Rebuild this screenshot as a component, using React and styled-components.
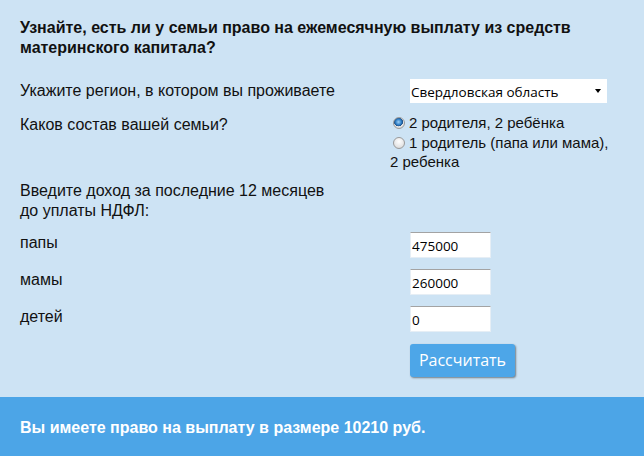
import React, { useState } from 'react';
import styled, { createGlobalStyle } from 'styled-components';

const GlobalStyle = createGlobalStyle`
    html, body {
        margin: 0;
        padding: 0;
        background: #cde3f4;
    }
    body {
        font-family: "Liberation Sans", Arial, sans-serif;
        color: #111;
    }
`;

const Page = styled.div`
    width: 644px;
    height: 456px;
    display: flex;
    flex-direction: column;
    background: #cde3f4;
    overflow: hidden;
`;

const Form = styled.div`
    flex: 1;
    padding: 18px 0 0 20px;
`;

const Title = styled.h1`
    margin: 0 0 21px;
    font-size: 16px;
    line-height: 20px;
    font-weight: bold;
    width: 580px;
`;

const Row = styled.div`
    display: grid;
    grid-template-columns: 370px 1fr;
    align-items: ${props => props.$align || 'start'};
    margin-bottom: ${props => props.$gap || 0}px;
`;

const Label = styled.div`
    font-size: 16px;
    line-height: 20px;
    padding-top: ${props => props.$top || 0}px;
`;

const Control = styled.div`
    padding-left: ${props => props.$indent ?? 20}px;
`;

const SelectWrap = styled.div`
    position: relative;
    width: 197px;
    height: 24px;
    background: #fff;
    &::after {
        content: '';
        position: absolute;
        right: 6px;
        top: 10px;
        border-left: 3.5px solid transparent;
        border-right: 3.5px solid transparent;
        border-top: 4px solid #000;
        pointer-events: none;
    }
`;

const Select = styled.select`
    appearance: none;
    width: 100%;
    height: 100%;
    border: 0;
    background: transparent;
    font-family: "Open Sans", "Noto Sans", sans-serif;
    font-size: 13.5px;
    color: #000;
    padding: 2px 0 0 1px;
    outline: none;
`;

const RadioList = styled.div`
    width: 220px;
    font-size: 15px;
    line-height: 19.5px;
`;

const RadioLabel = styled.label`
    display: block;
    cursor: pointer;
`;

const Radio = styled.input.attrs({ type: 'radio' })`
    appearance: none;
    box-sizing: border-box;
    margin: 0 4px 0 3px;
    width: 12px;
    height: 12px;
    vertical-align: -1px;
    border-radius: 50%;
    border: 1px solid #9a9a9a;
    background: radial-gradient(circle at 50% 35%, #ffffff 0%, #e6e6e6 60%, #d2d2d2 100%);
    cursor: pointer;
    &:checked {
        background:
            radial-gradient(circle at 45% 40%, #9fd0f5 0%, #2f7fc7 35%, #1d4f86 52%, transparent 56%),
            radial-gradient(circle at 50% 35%, #ffffff 0%, #e6e6e6 60%, #d2d2d2 100%);
    }
`;

const Field = styled.input`
    box-sizing: border-box;
    width: 81px;
    height: 26px;
    padding: 3px 1px 0;
    border: 1px solid #e6eef5;
    border-top-color: #a3a3a3;
    background: #fff;
    font-family: "Open Sans", "Noto Sans", sans-serif;
    font-size: 13.5px;
    color: #000;
    outline: none;
`;

const Button = styled.button`
    width: 105px;
    height: 33px;
    background: #4da6e8;
    color: #fff;
    border: 0;
    border-radius: 3px;
    box-shadow: 1px 1px 2px rgba(0, 0, 0, 0.45);
    font-family: "Open Sans", "Noto Sans", sans-serif;
    font-size: 16px;
    cursor: pointer;
`;

const Result = styled.div`
    height: 59px;
    background: #4ca5e7;
    color: #fff;
    font-size: 16px;
    font-weight: bold;
    display: flex;
    align-items: center;
    padding: 3px 0 0 20px;
    box-sizing: border-box;
`;

export default function App() {
    const [family, setFamily] = useState('two');
    const [income, setIncome] = useState({ dad: '475000', mom: '260000', kids: '0' });

    const setField = key => e => setIncome({ ...income, [key]: e.target.value });

    return (
        <Page>
            <GlobalStyle />
            <Form>
                <Title>Узнайте, есть ли у семьи право на ежемесячную выплату из средств материнского капитала?</Title>

                <Row $align="center" $gap={10}>
                    <Label>Укажите регион, в котором вы проживаете</Label>
                    <Control>
                        <SelectWrap>
                            <Select defaultValue="sverdl">
                                <option value="sverdl">Свердловская область</option>
                            </Select>
                        </SelectWrap>
                    </Control>
                </Row>

                <Row $gap={9}>
                    <Label $top={2}>Каков состав вашей семьи?</Label>
                    <Control $indent={0}>
                        <RadioList>
                            <RadioLabel>
                                <Radio name="family" checked={family === 'two'} onChange={() => setFamily('two')} />
                                2 родителя, 2 ребёнка
                            </RadioLabel>
                            <RadioLabel>
                                <Radio name="family" checked={family === 'one'} onChange={() => setFamily('one')} />
                                1 родитель (папа или мама), 2 ребенка
                            </RadioLabel>
                        </RadioList>
                    </Control>
                </Row>

                <Row $gap={11}>
                    <Label>Введите доход за последние 12 месяцев<br />до уплаты НДФЛ:</Label>
                </Row>

                <Row $gap={11}>
                    <Label $top={1}>папы</Label>
                    <Control><Field value={income.dad} onChange={setField('dad')} /></Control>
                </Row>
                <Row $gap={11}>
                    <Label $top={1}>мамы</Label>
                    <Control><Field value={income.mom} onChange={setField('mom')} /></Control>
                </Row>
                <Row $gap={12}>
                    <Label $top={1}>детей</Label>
                    <Control><Field value={income.kids} onChange={setField('kids')} /></Control>
                </Row>
                <Row>
                    <div />
                    <Control><Button>Рассчитать</Button></Control>
                </Row>
            </Form>
            <Result>Вы имеете право на выплату в размере 10210 руб.</Result>
        </Page>
    );
}
